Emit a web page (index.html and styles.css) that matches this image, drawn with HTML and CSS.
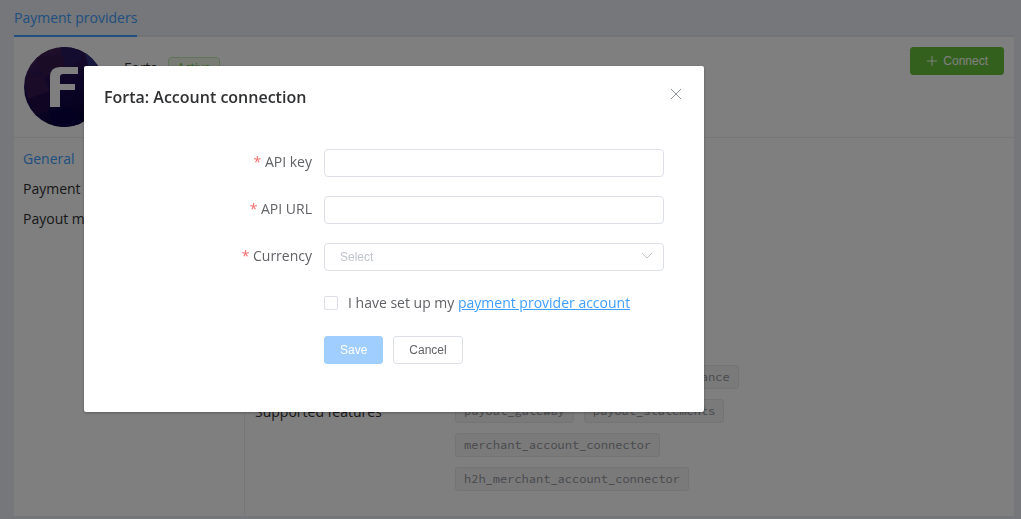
FILE: index.html
```html
<!DOCTYPE html>
<html lang="en">
<head>
<meta charset="utf-8">
<meta name="viewport" content="width=device-width, initial-scale=1">
<title>Payment providers</title>
<link rel="stylesheet" href="styles.css">
</head>
<body>
<div class="page">
  <nav class="tabs"><a class="tab" href="#">Payment providers</a></nav>
  <main class="panel">
    <header class="provider">
      <svg class="logo" viewBox="0 0 80 80" aria-hidden="true">
        <defs>
          <linearGradient id="sphere" x1="0.2" y1="0" x2="0.6" y2="1">
            <stop offset="0" stop-color="#472257"/>
            <stop offset="0.5" stop-color="#1c0c50"/>
            <stop offset="1" stop-color="#030036"/>
          </linearGradient>
          <clipPath id="disc"><circle cx="40" cy="40" r="40"/></clipPath>
        </defs>
        <g clip-path="url(#disc)">
          <rect width="80" height="80" fill="url(#sphere)"/>
          <path d="M12 10 36 8 42 20 20 30Z" fill="#34184f"/>
          <path d="M36 0 62 0 56 14 42 20Z" fill="#291a5e"/>
          <path d="M60 4 80 14 80 36 66 24Z" fill="#30307c"/>
          <path d="M0 28 20 30 26 44 4 52Z" fill="#351650"/>
          <path d="M4 52 26 44 24 64 12 68Z" fill="#230b49"/>
          <path d="M54 34 80 38 68 58Z" fill="#190b58"/>
          <path d="M24 64 48 60 60 80 30 80Z" fill="#070042"/>
        </g>
        <path d="M26 60V30Q26 20 36 20H54V27H39Q36 27 36 30V37H51V43H36V60Z" fill="#fff"/>
      </svg>
      <div class="provider-title"><span>Forta</span><span class="status">Active</span></div>
      <button class="button button-connect" type="button">
        <svg class="plus" viewBox="0 0 12 12" aria-hidden="true"><path d="M6 1V11M1 6H11"/></svg>
        Connect
      </button>
    </header>
    <div class="content">
      <nav class="side">
        <a class="side-link side-current" href="#">General</a>
        <a class="side-link" href="#">Payment methods</a>
        <a class="side-link" href="#">Payout methods</a>
      </nav>
      <section class="details">
        <div class="features-label">Supported features</div>
        <div class="tags">
          <span class="tag">merchant_statements_gateway</span>
          <span class="tag">payment_gateway</span>
          <span class="tag">payout_get_balance</span>
          <span class="tag">payout_gateway</span>
          <span class="tag">payout_statements</span>
          <span class="tag">merchant_account_connector</span>
          <span class="tag">h2h_merchant_account_connector</span>
        </div>
      </section>
    </div>
  </main>
</div>

<div class="overlay">
  <div class="dialog" role="dialog" aria-modal="true" aria-labelledby="dialog-title">
    <div class="dialog-header">
      <h1 class="dialog-title" id="dialog-title">Forta: Account connection</h1>
      <button class="close" type="button" aria-label="Close">
        <svg class="close-icon" viewBox="0 0 16 16" aria-hidden="true"><path d="M3 3 13 13M13 3 3 13"/></svg>
      </button>
    </div>
    <form class="form">
      <label class="label" for="api-key"><span class="required">*</span> API key</label>
      <input class="field" id="api-key" type="text">
      <label class="label" for="api-url"><span class="required">*</span> API URL</label>
      <input class="field" id="api-url" type="text">
      <label class="label" for="currency"><span class="required">*</span> Currency</label>
      <div class="select-wrap">
        <select class="field select" id="currency"><option>Select</option></select>
        <svg class="chevron" viewBox="0 0 12 12" aria-hidden="true"><path d="M1 3 6 8 11 3"/></svg>
      </div>
      <div class="agree">
        <input class="checkbox" id="agree" type="checkbox">
        <span><label for="agree">I have set up my</label> <a class="link" href="#">payment provider account</a></span>
      </div>
      <div class="actions">
        <button class="button button-save" type="submit" disabled>Save</button>
        <button class="button button-cancel" type="button">Cancel</button>
      </div>
    </form>
  </div>
</div>
</body>
</html>
```
FILE: styles.css
```css
* {
  box-sizing: border-box;
}

body {
  margin: 0;
  background: #eceef5;
  color: #303133;
  font: 14px/20px "Open Sans", sans-serif;
}

.page {
  padding: 0 7px 3px 14px;
}

.tabs {
  display: flex;
  border-bottom: 2px solid #e4e7ed;
}

.tab {
  margin-bottom: -2px;
  padding: 8px 0 7px;
  border-bottom: 2px solid #409eff;
  color: #409eff;
  text-decoration: none;
}

.panel {
  background: #fff;
}

.provider {
  display: flex;
  align-items: flex-start;
  padding: 10px;
  border-bottom: 1px solid #ebeef5;
}

.logo {
  width: 80px;
  height: 80px;
}

.provider-title {
  display: flex;
  align-items: center;
  gap: 10px;
  margin: 10px auto 0 20px;
}

.status {
  padding: 0 8px;
  border: 1px solid #c2e7b0;
  border-radius: 4px;
  background: #f0f9eb;
  color: #67c23a;
  font-size: 12px;
}

.button {
  height: 28px;
  padding: 0 15px;
  border: 1px solid #dcdfe6;
  border-radius: 3px;
  font: 12px/12px "Liberation Sans", sans-serif;
}

.button-connect {
  display: flex;
  align-items: center;
  gap: 5px;
  border-color: #67c23a;
  background: #67c23a;
  color: #fff;
}

.plus {
  width: 12px;
  height: 12px;
  fill: none;
  stroke: currentColor;
}

.content {
  display: flex;
  min-height: 378px;
}

.side {
  display: flex;
  flex-direction: column;
  gap: 10px;
  width: 231px;
  padding: 11px 9px;
  border-right: 1px solid #ebeef5;
}

.side-link {
  color: #303133;
  text-decoration: none;
}

.side-current {
  color: #409eff;
}

.details {
  display: flex;
  flex: 1;
  align-items: center;
  align-self: flex-end;
  padding: 0 10px 25px;
}

.features-label {
  width: 200px;
  padding-top: 2px;
}

.tags {
  display: flex;
  flex-wrap: wrap;
  gap: 10px;
  max-width: 320px;
}

.tag {
  padding: 0 8px;
  border: 1px solid #e9e9eb;
  border-radius: 3px;
  background: #f4f4f5;
  color: #909399;
  font: 12px/22px "Source Code Pro", "DejaVu Sans Mono", monospace;
}

.overlay {
  position: fixed;
  inset: 0;
  padding: 66px 84px;
  background: rgba(0, 0, 0, 0.5);
}

.dialog {
  max-width: 620px;
  padding: 20px 20px 48px;
  border-radius: 2px;
  background: #fff;
  box-shadow: 0 1px 3px rgba(0, 0, 0, 0.3);
  color: #606266;
}

.dialog-header {
  display: flex;
  align-items: flex-start;
  justify-content: space-between;
}

.dialog-title {
  margin: 0;
  color: #303133;
  font-size: 16px;
  font-weight: 600;
  line-height: 22px;
}

.close {
  display: flex;
  padding: 0;
  border: 0;
  background: none;
  color: #909399;
}

.close-icon {
  width: 16px;
  height: 16px;
  fill: none;
  stroke: currentColor;
}

.form {
  display: grid;
  grid-template-columns: 208px 1fr;
  gap: 19px 12px;
  padding: 41px 20px 0 0;
}

.label {
  line-height: 26px;
  text-align: right;
}

.required {
  color: #f56c6c;
}

.field {
  display: block;
  width: 100%;
  height: 28px;
  padding: 0 15px;
  border: 1px solid #dcdfe6;
  border-radius: 4px;
  background: #fff;
  color: #606266;
  font: 12px "Liberation Sans", sans-serif;
}

.select-wrap {
  position: relative;
}

.select {
  appearance: none;
  color: #c0c4cc;
}

.chevron {
  position: absolute;
  top: 7px;
  right: 11px;
  width: 12px;
  height: 12px;
  fill: none;
  stroke: #c0c4cc;
  pointer-events: none;
}

.agree {
  display: flex;
  grid-column: 2;
  align-items: center;
  gap: 10px;
  height: 27px;
  padding-bottom: 1px;
}

.checkbox {
  width: 14px;
  height: 14px;
  margin: 0;
  border: 1px solid #dcdfe6;
  border-radius: 2px;
  background: #fff;
  appearance: none;
}

.link {
  color: #409eff;
}

.actions {
  display: flex;
  grid-column: 2;
  gap: 10px;
}

.button-save {
  border-color: #a0cfff;
  background: #a0cfff;
  color: #fff;
}

.button-cancel {
  background: #fff;
  color: #606266;
}
```
